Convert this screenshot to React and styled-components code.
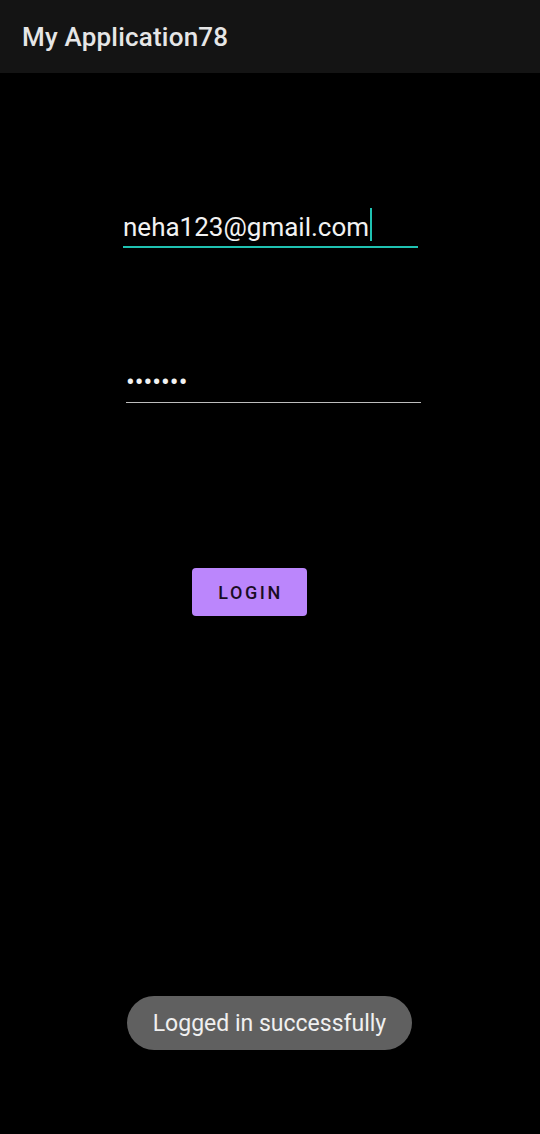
import styled, { createGlobalStyle } from 'styled-components';

const GlobalStyle = createGlobalStyle`
	body {
		margin: 0;
		background: #000;
		font-family: Roboto, "Liberation Sans", sans-serif;
	}
`;

export default function App() {
	return (
		<Screen>
			<GlobalStyle />
			<AppBar>
				<Title>My Application78</Title>
			</AppBar>

			<Form>
				<Field $focused $left={123}>
					<FieldText>
						neha123@gmail.com
						<Cursor />
					</FieldText>
				</Field>

				<Field $left={126} $top={114}>
					<FieldText $dots>•••••••</FieldText>
				</Field>

				<LoginButton>LOGIN</LoginButton>
			</Form>

			<Toast>Logged in successfully</Toast>
		</Screen>
	);
}

const Screen = styled.div`
	position: relative;
	width: 540px;
	height: 1134px;
	background: #000;
	overflow: hidden;
`;

const AppBar = styled.header`
	height: 73px;
	background: #141414;
	display: flex;
	align-items: center;
	padding: 0 22px;
	box-sizing: border-box;
`;

const Title = styled.h1`
	margin: 0;
	font-size: 26px;
	font-weight: 500;
	color: #e6e6e6;
	letter-spacing: 0.2px;
`;

const Form = styled.main`
	display: flex;
	flex-direction: column;
	padding-top: 132px;
`;

const Field = styled.div`
	position: relative;
	margin-left: ${p => p.$left}px;
	margin-top: ${p => p.$top || 0}px;
	width: 295px;
	border-bottom: ${p => p.$focused ? '2px solid #1fc2b2' : '1px solid #bdbdbd'};
`;

const FieldText = styled.div`
	display: flex;
	align-items: center;
	height: 40px;
	padding-top: 2px;
	margin-bottom: -1px;
	font-size: 26px;
	color: #f2f2f2;
	line-height: 40px;
	${p => p.$dots && `
		padding-top: 0;
		margin-bottom: 0;
		font-size: 26px;
		letter-spacing: 0;
	`}
`;

const Cursor = styled.span`
	display: inline-block;
	width: 2px;
	height: 33px;
	margin-left: 1px;
	margin-top: -6px;
	background: #1fc2b2;
`;

const LoginButton = styled.button`
	align-self: flex-start;
	margin: 165px 0 0 192px;
	width: 115px;
	height: 48px;
	border: none;
	border-radius: 4px;
	background: #bb86fc;
	color: #1a0d24;
	font-family: Roboto, "Liberation Sans", sans-serif;
	font-size: 18px;
	font-weight: 500;
	letter-spacing: 2.6px;
	padding: 0 0 0 2px;
`;

const Toast = styled.div`
	position: absolute;
	left: 127px;
	bottom: 84px;
	width: 285px;
	height: 54px;
	border-radius: 27px;
	background: #606060;
	color: #f0f0f0;
	font-size: 23px;
	display: flex;
	align-items: center;
	justify-content: center;
`;
